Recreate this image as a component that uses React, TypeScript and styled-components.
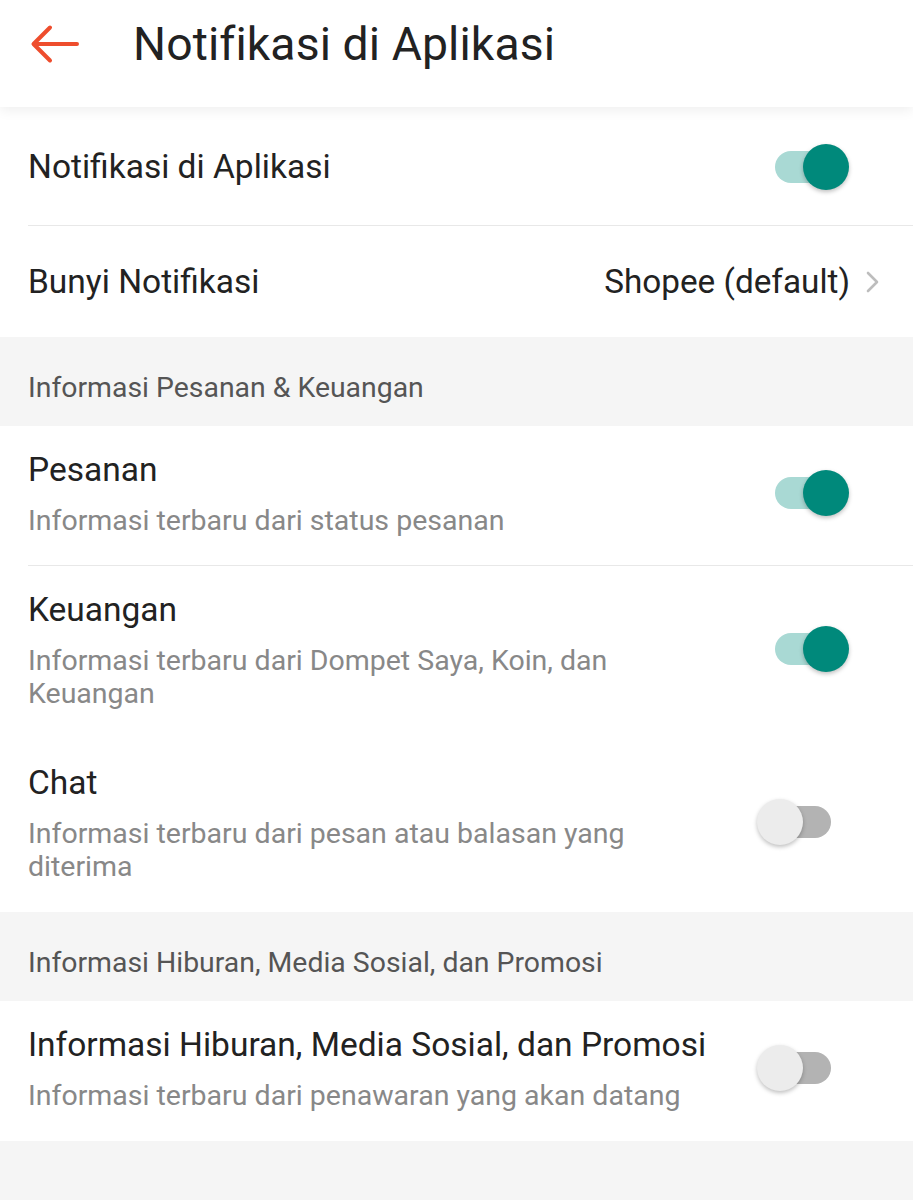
import React, { useState } from "react";
import styled, { createGlobalStyle } from "styled-components";

const Global = createGlobalStyle`
  html, body { margin: 0; padding: 0; background: #f5f5f5; }
  body { font-family: Roboto, "Noto Sans", "Liberation Sans", sans-serif; -webkit-font-smoothing: antialiased; }
  * { box-sizing: border-box; }
`;

const Page = styled.div`
  width: 913px;
  min-height: 1200px;
  background: #f5f5f5;
`;

const Header = styled.header`
  position: relative;
  z-index: 2;
  height: 107px;
  background: #fff;
  display: flex;
  align-items: center;
  padding: 0 0 20px 30px;
  box-shadow: 0 3px 12px rgba(0, 0, 0, 0.07);
`;

const BackButton = styled.button`
  width: 52px;
  height: 44px;
  border: 0;
  background: none;
  padding: 0;
  display: flex;
  align-items: center;
  cursor: pointer;
`;

const Title = styled.h1`
  margin: 0 0 0 51px;
  font-size: 46.3px;
  font-weight: 400;
  color: #222;
  letter-spacing: 0.1px;
`;

const Card = styled.section`
  background: #fff;
`;

const Row = styled.div<{ $divider?: boolean; $height?: number }>`
  position: relative;
  display: flex;
  align-items: center;
  min-height: ${(p) => p.$height ?? 111}px;
  padding: 0 33px 0 28px;
  &::after {
    content: "";
    display: ${(p) => (p.$divider ? "block" : "none")};
    position: absolute;
    left: 28px;
    right: 0;
    bottom: 0;
    height: 1px;
    background: #e8e8e8;
  }
`;

const DetailRow = styled.div<{ $divider?: boolean }>`
  position: relative;
  display: flex;
  align-items: center;
  gap: 40px;
  padding: 22px 64px 29px 28px;
  &::after {
    content: "";
    display: ${(p) => (p.$divider ? "block" : "none")};
    position: absolute;
    left: 28px;
    right: 0;
    bottom: 0;
    height: 1px;
    background: #e8e8e8;
  }
`;

const TextBlock = styled.div`
  flex: 1;
  display: flex;
  flex-direction: column;
  gap: 12px;
`;

const Label = styled.div`
  font-size: 33.5px;
  color: #222;
  line-height: 44px;
`;

const Sub = styled.div`
  font-size: 28.5px;
  color: #888;
  line-height: 33px;
`;

const Value = styled.span`
  font-size: 33.3px;
  color: #222;
  margin-right: 16px;
`;

const SectionHeader = styled.div`
  height: 89px;
  display: flex;
  align-items: center;
  padding: 12px 28px 0;
  font-size: 28.4px;
  color: #555;
  background: #f5f5f5;
`;

const SwitchWrap = styled.button`
  position: relative;
  flex: none;
  width: 92px;
  height: 46px;
  border: 0;
  background: none;
  padding: 0;
  cursor: pointer;
`;

const Track = styled.span<{ $on: boolean }>`
  position: absolute;
  left: 18px;
  top: 7px;
  width: 56px;
  height: 32px;
  border-radius: 16px;
  background: ${(p) => (p.$on ? "#a9d9d4" : "#b3b3b3")};
`;

const Knob = styled.span<{ $on: boolean }>`
  position: absolute;
  top: 0;
  left: ${(p) => (p.$on ? "46px" : "0")};
  width: 46px;
  height: 46px;
  border-radius: 50%;
  background: ${(p) => (p.$on ? "#00897b" : "#ececec")};
  box-shadow: 0 2px 4px rgba(0, 0, 0, 0.25);
`;

function Toggle({ initial }: { initial: boolean }) {
  const [on, setOn] = useState(initial);
  return (
    <SwitchWrap onClick={() => setOn(!on)} aria-pressed={on}>
      <Track $on={on} />
      <Knob $on={on} />
    </SwitchWrap>
  );
}

const ToggleSlot = styled.div`
  margin-right: 31px;
  display: flex;
`;

export default function App() {
  return (
    <Page>
      <Global />
      <Header>
        <BackButton aria-label="Kembali">
          <svg width="50" height="40" viewBox="0 0 50 40" fill="none">
            <path d="M47 20H4M20 3.5L3.5 20 20 36.5" stroke="#ee4d2d" strokeWidth="4" strokeLinecap="round" strokeLinejoin="round" />
          </svg>
        </BackButton>
        <Title>Notifikasi di Aplikasi</Title>
      </Header>
      <Card>
        <Row $divider $height={119}>
          <TextBlock>
            <Label>Notifikasi di Aplikasi</Label>
          </TextBlock>
          <ToggleSlot>
            <Toggle initial={true} />
          </ToggleSlot>
        </Row>
        <Row>
          <TextBlock>
            <Label>Bunyi Notifikasi</Label>
          </TextBlock>
          <Value>Shopee (default)</Value>
          <svg width="14" height="22" viewBox="0 0 14 22" fill="none">
            <path d="M2 2l9 9-9 9" stroke="#bdbdbd" strokeWidth="2.6" strokeLinecap="round" strokeLinejoin="round" />
          </svg>
        </Row>
      </Card>
      <SectionHeader>Informasi Pesanan &amp; Keuangan</SectionHeader>
      <Card>
        <DetailRow $divider>
          <TextBlock>
            <Label>Pesanan</Label>
            <Sub>Informasi terbaru dari status pesanan</Sub>
          </TextBlock>
          <Toggle initial={true} />
        </DetailRow>
        <DetailRow>
          <TextBlock>
            <Label>Keuangan</Label>
            <Sub>Informasi terbaru dari Dompet Saya, Koin, dan Keuangan</Sub>
          </TextBlock>
          <Toggle initial={true} />
        </DetailRow>
        <DetailRow>
          <TextBlock>
            <Label>Chat</Label>
            <Sub>Informasi terbaru dari pesan atau balasan yang diterima</Sub>
          </TextBlock>
          <Toggle initial={false} />
        </DetailRow>
      </Card>
      <SectionHeader>Informasi Hiburan, Media Sosial, dan Promosi</SectionHeader>
      <Card>
        <DetailRow>
          <TextBlock>
            <Label>Informasi Hiburan, Media Sosial, dan Promosi</Label>
            <Sub>Informasi terbaru dari penawaran yang akan datang</Sub>
          </TextBlock>
          <Toggle initial={false} />
        </DetailRow>
      </Card>
    </Page>
  );
}
